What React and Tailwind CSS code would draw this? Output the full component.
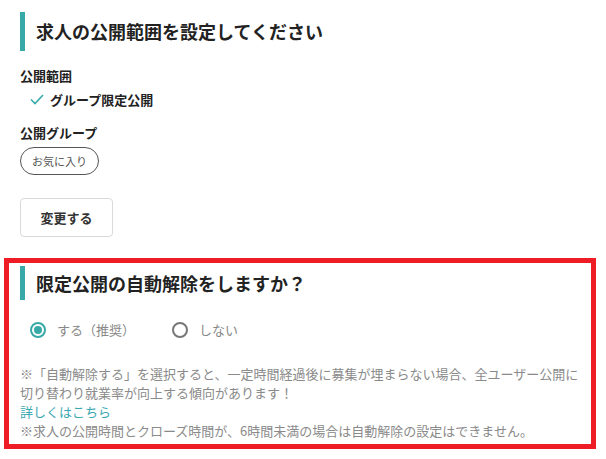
import React, { useState } from 'react';

const font = { fontFamily: '"Noto Sans CJK JP", "Noto Sans", sans-serif' };

const SectionTitle = ({ children, tall }) => (
  <div
    className={`flex items-center border-l-[5px] border-[#38a9a9] pl-[11px] text-[18px] font-bold text-[#222] ${
      tall ? 'h-[39px]' : 'h-[34px]'
    }`}
  >
    {children}
  </div>
);

const Radio = ({ checked, label, onClick }) => (
  <button onClick={onClick} className="flex items-center gap-[11px] text-[13px] text-[#888]">
    <span
      className={`flex h-[16px] w-[16px] items-center justify-center rounded-full border-2 ${
        checked ? 'border-[#38a9a9]' : 'border-[#777]'
      }`}
    >
      {checked && <span className="h-[8px] w-[8px] rounded-full bg-[#38a9a9]"></span>}
    </span>
    {label}
  </button>
);

const App = () => {
  const [auto, setAuto] = useState(true);

  return (
    <div className="min-h-[459px] w-[606px] bg-white px-5 pt-3" style={font}>
      <SectionTitle tall>求人の公開範囲を設定してください</SectionTitle>

      <div className="mt-[15px] text-[13px] font-bold leading-[19px] text-[#222]">公開範囲</div>
      <div className="mt-[5px] flex items-center pl-[10px] text-[13px] font-bold leading-[19px] text-[#222]">
        <svg width="14" height="11" viewBox="0 0 14 11" fill="none" className="mr-[6px]">
          <polyline points="1,5.5 5,9.5 13,1" stroke="#38a9a9" strokeWidth="1.6" />
        </svg>
        グループ限定公開
      </div>

      <div className="mt-[14px] text-[13px] font-bold leading-[19px] text-[#222]">公開グループ</div>
      <div className="mt-[5px] inline-flex h-[28px] w-[79px] items-center justify-center rounded-full border border-[#555] text-[11px] text-[#555]">
        お気に入り
      </div>

      <div>
        <button className="mt-[23px] h-[39px] w-[93px] rounded-[4px] border border-[#d9d9d9] text-[13px] font-bold text-[#333]">
          変更する
        </button>
      </div>

      <div className="ml-[-16px] mt-[21px] w-[592px] border-[5px] border-[#ee1c25] pb-[4px] pl-[11px] pr-[11px] pt-[3px]">
        <SectionTitle>限定公開の自動解除をしますか？</SectionTitle>
        <div className="mt-[20px] flex items-center gap-[37px] pl-[10px]">
          <Radio checked={auto} label="する（推奨）" onClick={() => setAuto(true)} />
          <Radio checked={!auto} label="しない" onClick={() => setAuto(false)} />
        </div>
        <div className="mt-[24px] text-[13px] leading-[19px] text-[#8a8a8a]">
          <p>
            ※「自動解除する」を選択すると、一定時間経過後に募集が埋まらない場合、全ユーザー公開に
            <br />
            切り替わり就業率が向上する傾向があります！
          </p>
          <a href="#" className="block text-[#3aa8b2]">
            詳しくはこちら
          </a>
          <p>※求人の公開時間とクローズ時間が、6時間未満の場合は自動解除の設定はできません。</p>
        </div>
      </div>
    </div>
  );
};

export default App;
